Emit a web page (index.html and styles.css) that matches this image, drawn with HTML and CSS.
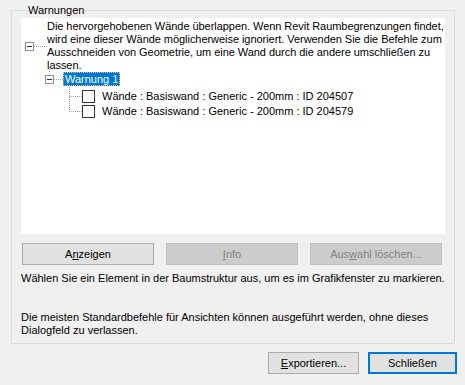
FILE: index.html
```html
<!DOCTYPE html>
<html lang="de">

<head>
    <meta charset="UTF-8">
    <meta name="viewport" content="width=device-width, initial-scale=1.0">
    <title>Warnungen</title>
    <link rel="stylesheet" href="styles.css">
</head>

<body>

    <div class="dialog">
        <fieldset class="group">
            <legend>Warnungen</legend>

            <!-- Warning tree -->
            <div class="tree">
                <div class="node root">
                    <span class="expander"></span>
                    <span class="branch"></span>
                    <span class="label">Die hervorgehobenen Wände überlappen. Wenn Revit Raumbegrenzungen findet,<br>wird eine dieser Wände möglicherweise ignoriert. Verwenden Sie die Befehle zum<br>Ausschneiden von Geometrie, um eine Wand durch die andere umschließen zu<br>lassen.</span>
                </div>
                <div class="node warning">
                    <span class="expander"></span>
                    <span class="branch short"></span>
                    <span class="label selected">Warnung 1</span>
                </div>
                <div class="children">
                    <div class="node child">
                        <span class="branch"></span>
                        <span class="checkbox"></span>
                        <span class="label">Wände : Basiswand : Generic - 200mm : ID 204507</span>
                    </div>
                    <div class="node child">
                        <span class="branch"></span>
                        <span class="checkbox"></span>
                        <span class="label">Wände : Basiswand : Generic - 200mm : ID 204579</span>
                    </div>
                </div>
            </div>

            <div class="actions">
                <button>A<u>n</u>zeigen</button>
                <button disabled><u>I</u>nfo</button>
                <button disabled>Aus<u>w</u>ahl löschen...</button>
            </div>

            <p class="hint">Wählen Sie ein Element in der Baumstruktur aus, um es im Grafikfenster zu markieren.</p>
            <p class="note">Die meisten Standardbefehle für Ansichten können ausgeführt werden, ohne dieses Dialogfeld zu verlassen.</p>
        </fieldset>

        <div class="footer">
            <button class="export"><u>E</u>xportieren...</button>
            <button class="close">Schließen</button>
        </div>
    </div>

</body>

</html>
```

FILE: styles.css
```css
body {
    font-family: 'Liberation Sans', Arial, sans-serif;
    font-size: 11px;
    margin: 0;
    background-color: #f0f0f0;
    color: #000;
}

.dialog {
    width: 465px;
    height: 385px;
    padding: 3px 0 0 11px;
    box-sizing: border-box;
}

.group {
    width: 444px;
    height: 341px;
    box-sizing: border-box;
    margin: 0;
    padding: 1px 9px 0 9px;
    border: 1px solid #dcdcdc;
}

.group legend {
    padding: 0 1px;
    margin-left: 6px;
    line-height: 14px;
}

/* tree */

.tree {
    position: relative;
    height: 216px;
    background-color: #fff;
    padding-top: 2px;
    box-sizing: border-box;
}

.node {
    display: flex;
    align-items: center;
}

.expander {
    position: relative;
    width: 9px;
    height: 9px;
    box-sizing: border-box;
    border: 1px solid #919191;
    background-color: #fff;
    flex-shrink: 0;
}

.expander::after {
    content: '';
    position: absolute;
    left: 1px;
    top: 3px;
    width: 5px;
    height: 1px;
    background-color: #333;
}

.branch {
    width: 13px;
    border-top: 1px dotted #a0a0a0;
    flex-shrink: 0;
}

.label {
    line-height: 13px;
    white-space: nowrap;
}

.root {
    padding-left: 4px;
}

.root .label {
    letter-spacing: -0.05px;
}

.warning {
    position: relative;
    padding-left: 24px;
    height: 14px;
}

.warning::before {
    content: '';
    position: absolute;
    left: 28px;
    top: -5px;
    height: 5px;
    border-left: 1px dotted #a0a0a0;
}

.branch.short {
    width: 9px;
}

.selected {
    background-color: #0078d7;
    color: #fff;
    padding: 0 2px;
    line-height: 14px;
    outline: 1px dotted #f7c16a;
    outline-offset: -1px;
}

.children {
    position: relative;
    margin-top: 3px;
    padding-left: 48px;
}

.children::before {
    content: '';
    position: absolute;
    left: 48px;
    top: -2px;
    bottom: 7px;
    border-left: 1px dotted #a0a0a0;
}

.child {
    height: 15px;
}

.child .branch {
    width: 13px;
}

.checkbox {
    width: 13px;
    height: 13px;
    box-sizing: border-box;
    border: 1px solid #333;
    background-color: #fff;
    margin-right: 7px;
    flex-shrink: 0;
}

/* buttons */

button {
    font-family: inherit;
    font-size: 11px;
    height: 22px;
    padding: 0;
    background-color: #e1e1e1;
    border: 1px solid #adadad;
    color: #000;
}

button:disabled {
    background-color: #cccccc;
    border-color: #bfbfbf;
    color: #838383;
}

.actions {
    display: flex;
    gap: 12px;
    margin-top: 9px;
    padding-left: 1px;
}

.actions button {
    width: 132px;
}

.hint {
    margin: 7px 0 0 0;
    line-height: 13px;
}

.note {
    margin: 26px 0 0 0;
    line-height: 13px;
}

.footer {
    display: flex;
    gap: 9px;
    margin-top: 8px;
    padding-left: 257px;
}

.footer .export {
    width: 91px;
}

.footer .close {
    width: 89px;
    border: 2px solid #0078d7;
}
```
